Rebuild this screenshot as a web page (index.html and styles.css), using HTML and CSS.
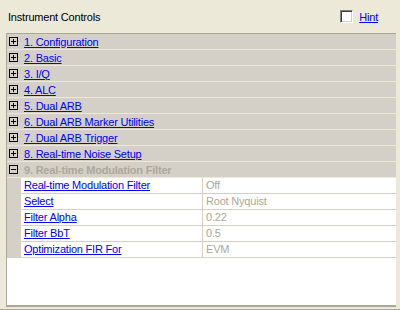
FILE: index.html
```html
<!doctype html>
<html>
<head>
<meta charset=utf-8>
<title>Instrument Controls</title>
<link rel="stylesheet" href="styles.css">
</head>
<body>

<div class=topbar>
  <span class=title>Instrument Controls</span>
  <span class=hint><span class=checkbox></span><a href="#">Hint</a></span>
</div>

<div class=panel>
  <div class=group><svg class=toggle viewBox="0 0 9 9"><rect x=0.5 y=0.5 width=8 height=8 fill=none stroke=#000 /><path d="M2 4.5h5M4.5 2v5" stroke=#000 /></svg><a href="#">1. Configuration</a></div>
  <div class=group><svg class=toggle viewBox="0 0 9 9"><rect x=0.5 y=0.5 width=8 height=8 fill=none stroke=#000 /><path d="M2 4.5h5M4.5 2v5" stroke=#000 /></svg><a href="#">2. Basic</a></div>
  <div class=group><svg class=toggle viewBox="0 0 9 9"><rect x=0.5 y=0.5 width=8 height=8 fill=none stroke=#000 /><path d="M2 4.5h5M4.5 2v5" stroke=#000 /></svg><a href="#">3. I/Q</a></div>
  <div class=group><svg class=toggle viewBox="0 0 9 9"><rect x=0.5 y=0.5 width=8 height=8 fill=none stroke=#000 /><path d="M2 4.5h5M4.5 2v5" stroke=#000 /></svg><a href="#">4. ALC</a></div>
  <div class=group><svg class=toggle viewBox="0 0 9 9"><rect x=0.5 y=0.5 width=8 height=8 fill=none stroke=#000 /><path d="M2 4.5h5M4.5 2v5" stroke=#000 /></svg><a href="#">5. Dual ARB</a></div>
  <div class=group><svg class=toggle viewBox="0 0 9 9"><rect x=0.5 y=0.5 width=8 height=8 fill=none stroke=#000 /><path d="M2 4.5h5M4.5 2v5" stroke=#000 /></svg><a href="#">6. Dual ARB Marker Utilities</a></div>
  <div class=group><svg class=toggle viewBox="0 0 9 9"><rect x=0.5 y=0.5 width=8 height=8 fill=none stroke=#000 /><path d="M2 4.5h5M4.5 2v5" stroke=#000 /></svg><a href="#">7. Dual ARB Trigger</a></div>
  <div class=group><svg class=toggle viewBox="0 0 9 9"><rect x=0.5 y=0.5 width=8 height=8 fill=none stroke=#000 /><path d="M2 4.5h5M4.5 2v5" stroke=#000 /></svg><a href="#">8. Real-time Noise Setup</a></div>
  <div class="group open"><svg class=toggle viewBox="0 0 9 9"><rect x=0.5 y=0.5 width=8 height=8 fill=none stroke=#000 /><path d="M2 4.5h5" stroke=#000 /></svg><span class=current>9. Real-time Modulation Filter</span></div>

  <div class=param><span class=indent></span><span class=name><a href="#">Real-time Modulation Filter</a></span><span class=value>Off</span></div>
  <div class=param><span class=indent></span><span class=name><a href="#">Select</a></span><span class=value>Root Nyquist</span></div>
  <div class=param><span class=indent></span><span class=name><a href="#">Filter Alpha</a></span><span class=value>0.22</span></div>
  <div class=param><span class=indent></span><span class=name><a href="#">Filter BbT</a></span><span class=value>0.5</span></div>
  <div class=param><span class=indent></span><span class=name><a href="#">Optimization FIR For</a></span><span class=value>EVM</span></div>
</div>

<div class=footer></div>

</body>
</html>
```

FILE: styles.css
```css
body {
  margin: 0;
  height: 310px;
  overflow: hidden;
  background-color: #ece9d8;
  font-family: "Liberation Sans", Arial, sans-serif;
  font-size: 11px;
  letter-spacing: -0.2px;
  color: #000;
}

a {
  color: #0000ff;
  text-decoration: underline;
}

.topbar {
  height: 33px;
  display: flex;
  align-items: center;
  padding: 0 22px 0 8px;
  box-sizing: border-box;
}
.hint {
  margin-left: auto;
  display: flex;
  align-items: center;
}
.checkbox {
  width: 11px;
  height: 11px;
  margin-right: 6px;
  background: #fff;
  border-top: 1px solid #808080;
  border-left: 1px solid #808080;
  border-bottom: 1px solid #fff;
  border-right: 1px solid #fff;
  box-shadow: inset 1px 1px #404040, inset -1px -1px #d4d0c8;
}

.panel {
  height: 271px;
  margin: 0 4px 0 6px;
  background: #fff;
  border-top: 1px solid #aca899;
  border-left: 1px solid #aca899;
  border-bottom: 2px solid #aca899;
  overflow: hidden;
}

.group {
  height: 15px;
  display: flex;
  align-items: center;
  background: #d4d0c8;
  border-bottom: 1px solid #ece9d8;
}
.toggle {
  width: 9px;
  height: 9px;
  margin: 0 6px 0 2px;
  flex: none;
}
.current {
  font-weight: bold;
  color: #aca899;
}

.param {
  height: 15px;
  display: flex;
  border-bottom: 1px solid #d4d0c8;
}
.indent {
  width: 14px;
  background: #d4d0c8;
  flex: none;
}
.name {
  width: 178px;
  padding-left: 3px;
  line-height: 15px;
  flex: none;
}
.value {
  flex: 1;
  padding-left: 3px;
  line-height: 15px;
  color: #aca899;
  border-left: 1px solid #d4d0c8;
}

.footer {
  height: 1px;
  margin-top: 2px;
  background: #aca899;
}
```
